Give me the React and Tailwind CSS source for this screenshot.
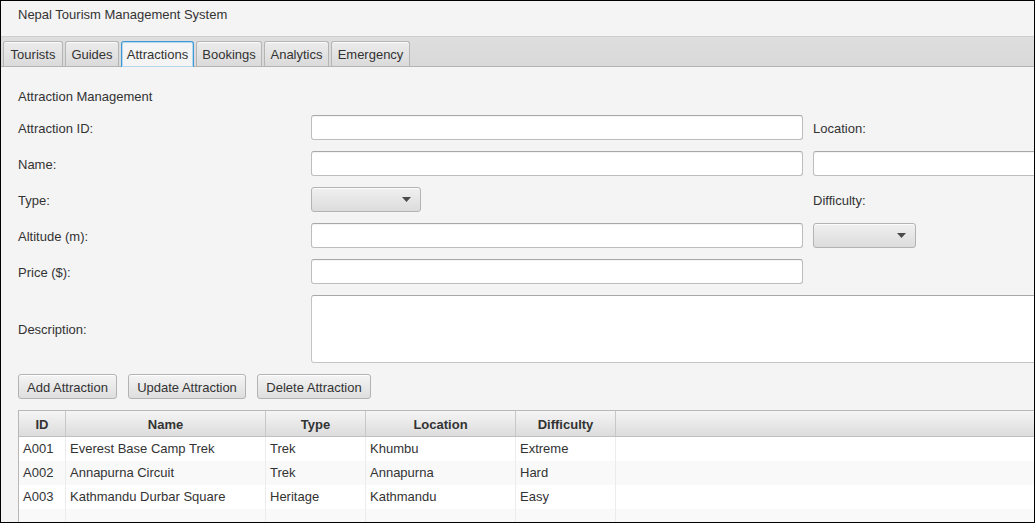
import React from "react";

const tabs = [
  { label: "Tourists", w: "w-[60px]" },
  { label: "Guides", w: "w-[54px]" },
  { label: "Attractions", w: "w-[73px]", active: true },
  { label: "Bookings", w: "w-[66px]" },
  { label: "Analytics", w: "w-[65px]" },
  { label: "Emergency", w: "w-[79px]" },
];

const rows = [
  ["A001", "Everest Base Camp Trek", "Trek", "Khumbu", "Extreme"],
  ["A002", "Annapurna Circuit", "Trek", "Annapurna", "Hard"],
  ["A003", "Kathmandu Durbar Square", "Heritage", "Kathmandu", "Easy"],
  ["", "", "", "", ""],
];

const cols = ["w-[47px]", "w-[200px]", "w-[100px]", "w-[150px]", "w-[100px]"];
const heads = ["ID", "Name", "Type", "Location", "Difficulty"];

function Field({ className = "" }) {
  return (
    <div
      className={`h-[25px] shrink-0 bg-white border border-[#bdbdbd] border-t-[#a8a8a8] rounded-[3px] shadow-[inset_0_1px_1px_rgba(0,0,0,0.05)] ${className}`}
    />
  );
}

function Combo({ className = "" }) {
  return (
    <div
      className={`h-[25px] shrink-0 flex items-center justify-end pr-[9px] border border-[#b3b3b3] rounded-[3px] bg-[linear-gradient(#f0f0f0,#dcdcdc)] shadow-[inset_0_1px_0_rgba(255,255,255,0.8)] ${className}`}
    >
      <svg width="9" height="5" viewBox="0 0 9 5">
        <path d="M0 0 L9 0 L4.5 5 Z" fill="#4a4a4a" />
      </svg>
    </div>
  );
}

function Button({ children, w }) {
  return (
    <div
      className={`h-[25px] ${w} shrink-0 pt-[2px] flex items-center justify-center border border-[#b3b3b3] rounded-[3px] bg-[linear-gradient(#f4f4f4,#dedede)] shadow-[inset_0_1px_0_rgba(255,255,255,0.9)] text-[13px] text-[#333]`}
    >
      {children}
    </div>
  );
}

function Label({ children }) {
  return <div className="w-[293px] shrink-0 pt-[2px]">{children}</div>;
}

export default function App() {
  return (
    <div className="w-[1035px] h-[523px] border border-black bg-[#f4f4f4] overflow-hidden font-['Liberation_Sans',Arial,sans-serif] text-[13px] leading-[16px] text-[#333]">
      {/* title */}
      <div className="h-[35px] pl-[17px] pt-[6px]">Nepal Tourism Management System</div>

      {/* tab header */}
      <div className="h-[31px] border-t border-[#cfcfcf] border-b border-b-[#b4b4b4] bg-[linear-gradient(#dedede,#d9d9d9)] flex items-end gap-[2px] pl-[2px]">
        {tabs.map((t) =>
          t.active ? (
            <div
              key={t.label}
              className={`${t.w} h-[26px] -mb-[1px] pt-[1px] flex items-center justify-center rounded-t-[3px] border border-b-0 border-[#3d9ad6] bg-[#f4f4f4] shadow-[inset_0_0_0_1px_#b6d8ef]`}
            >
              {t.label}
            </div>
          ) : (
            <div
              key={t.label}
              className={`${t.w} h-[25px] pt-[2px] flex items-center justify-center rounded-t-[3px] border border-b-0 border-[#b5b5b5] bg-[linear-gradient(#ececec,#dadada)] shadow-[inset_0_1px_0_rgba(255,255,255,0.8)]`}
            >
              {t.label}
            </div>
          )
        )}
      </div>

      {/* content */}
      <div className="pl-[17px] pt-[21px] flex flex-col gap-[11px]">
        <div className="pt-[1px] -mb-[1px]">Attraction Management</div>

        <div className="flex flex-col gap-[11px]">
          <div className="flex items-center h-[25px]">
            <Label>Attraction ID:</Label>
            <Field className="w-[492px]" />
            <div className="ml-[10px] pt-[2px]">Location:</div>
          </div>
          <div className="flex items-center h-[25px]">
            <Label>Name:</Label>
            <Field className="w-[492px]" />
            <Field className="ml-[10px] w-[260px]" />
          </div>
          <div className="flex items-center h-[25px]">
            <Label>Type:</Label>
            <div className="w-[492px] shrink-0">
              <Combo className="w-[110px]" />
            </div>
            <div className="ml-[10px] pt-[2px]">Difficulty:</div>
          </div>
          <div className="flex items-center h-[25px]">
            <Label>Altitude (m):</Label>
            <Field className="w-[492px]" />
            <Combo className="ml-[10px] w-[103px]" />
          </div>
          <div className="flex items-center h-[25px]">
            <Label>Price ($):</Label>
            <Field className="w-[492px]" />
          </div>
          <div className="flex items-center h-[68px]">
            <Label>Description:</Label>
            <div className="h-[68px] w-[760px] shrink-0 bg-white border border-[#c4c4c4] border-t-[#a8a8a8] rounded-[3px]" />
          </div>
        </div>

        <div className="flex gap-[11px]">
          <Button w="w-[99px]">Add Attraction</Button>
          <Button w="w-[118px]">Update Attraction</Button>
          <Button w="w-[114px]">Delete Attraction</Button>
        </div>

        {/* table */}
        <div className="w-[1040px] h-[120px] border border-[#b8b8b8] bg-white">
          <div className="flex h-[26px] border-b border-[#c0c0c0] bg-[linear-gradient(#f5f5f5,#dcdcdc)] font-bold">
            {heads.map((h, i) => (
              <div
                key={h}
                className={`${cols[i]} shrink-0 pt-[2px] flex items-center justify-center border-r border-[#c8c8c8]`}
              >
                {h}
              </div>
            ))}
            <div className="flex-1" />
          </div>
          {rows.map((r, ri) => (
            <div
              key={ri}
              className={`flex h-[24px] ${ri % 2 === 1 ? "bg-[#f9f9f9]" : "bg-white"}`}
            >
              {r.map((c, ci) => (
                <div
                  key={ci}
                  className={`${cols[ci]} shrink-0 flex items-center pl-[4px] border-r border-[#ececec]`}
                >
                  {c}
                </div>
              ))}
              <div className="flex-1" />
            </div>
          ))}
        </div>
      </div>
    </div>
  );
}
